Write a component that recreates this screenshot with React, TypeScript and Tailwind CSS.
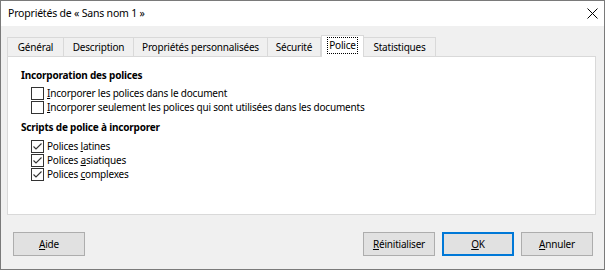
import React from 'react';

const font = { fontFamily: '"Noto Sans", "Open Sans", sans-serif' };

interface CheckProps {
  checked: boolean;
  children: React.ReactNode;
}

function CheckRow({ checked, children }: CheckProps) {
  return (
    <div className="flex items-center h-[14px] pl-[10px]">
      <span className="w-[13px] h-[13px] border border-[#333333] bg-white flex items-center justify-center shrink-0">
        {checked && (
          <svg width="11" height="11" viewBox="0 0 11 11">
            <polyline points="1.5,5.5 4,8 9.5,2.5" fill="none" stroke="#333333" strokeWidth="1.1" />
          </svg>
        )}
      </span>
      <span className="ml-[3px] leading-[14px] whitespace-nowrap">{children}</span>
    </div>
  );
}

function Tab({ label, width, selected }: { label: string; width: number; selected?: boolean }) {
  if (selected) {
    return (
      <div
        className="h-[22px] -mb-px bg-white border border-b-0 border-[#d9d9d9] relative z-10 flex items-start justify-center pt-[1px]"
        style={{ width }}
      >
        <span className="border border-dotted border-black px-px h-[17px] flex items-center whitespace-nowrap">{label}</span>
      </div>
    );
  }
  return (
    <div
      className="h-[19px] bg-[#f0f0f0] border border-b-0 border-[#d9d9d9] -ml-px first:ml-0 flex items-center justify-center whitespace-nowrap"
      style={{ width }}
    >
      {label}
    </div>
  );
}

function Btn({ children, focused }: { children: React.ReactNode; focused?: boolean }) {
  return (
    <button
      className={
        'w-[72px] h-[24px] bg-[#e1e1e1] text-[10px] tracking-[-0.2px] text-black flex items-center justify-center ' +
        (focused ? 'border-2 border-[#0078d7]' : 'border border-[#adadad]')
      }
      style={font}
    >
      {children}
    </button>
  );
}

export default function App() {
  return (
    <div
      className="w-[605px] h-[270px] border border-[#7a7a7a] bg-[#f0f0f0] flex flex-col text-[10px] tracking-[-0.2px] text-black"
      style={font}
    >
      {/* title bar */}
      <div className="h-[25px] bg-white flex items-center justify-between pl-[7px] pr-[6px] shrink-0">
        <span className="text-[10.5px]">Propriétés de « Sans nom 1 »</span>
        <svg width="11" height="11" viewBox="0 0 11 11">
          <path d="M0.5 0.5 L10.5 10.5 M10.5 0.5 L0.5 10.5" stroke="#000" strokeWidth="1" />
        </svg>
      </div>

      {/* tabs */}
      <div className="flex items-end h-[21px] mt-[9px] ml-[6px]">
        <Tab label="Général" width={57} />
        <Tab label="Description" width={71} />
        <Tab label="Propriétés personnalisées" width={135} />
        <Tab label="Sécurité" width={54} />
        <Tab label="Police" width={43} selected />
        <Tab label="Statistiques" width={73} />
      </div>

      {/* panel */}
      <div className="ml-[6px] mr-[8px] h-[159px] bg-white border border-[#d9d9d9] pt-[11px] pl-[13px]">
        <div className="font-bold leading-[14px]">Incorporation des polices</div>
        <div className="mt-[4px]">
          <CheckRow checked={false}>
            <u>I</u>ncorporer les polices dans le document
          </CheckRow>
          <CheckRow checked={false}>
            <u>I</u>ncorporer seulement les polices qui sont utilisées dans les documents
          </CheckRow>
        </div>
        <div className="font-bold leading-[14px] mt-[6px]">Scripts de police à incorporer</div>
        <div className="mt-[5px]">
          <CheckRow checked>
            Polices <u>l</u>atines
          </CheckRow>
          <CheckRow checked>
            Polices <u>a</u>siatiques
          </CheckRow>
          <CheckRow checked>
            Polices <u>c</u>omplexes
          </CheckRow>
        </div>
      </div>

      {/* buttons */}
      <div className="flex items-center mt-[17px] pl-[12px] pr-[11px]">
        <Btn>
          <u>A</u>ide
        </Btn>
        <div className="flex-1" />
        <div className="flex gap-[7px]">
          <Btn>
            <u>R</u>éinitialiser
          </Btn>
          <Btn focused>
            <u>O</u>K
          </Btn>
          <Btn>
            <u>A</u>nnuler
          </Btn>
        </div>
      </div>
    </div>
  );
}
